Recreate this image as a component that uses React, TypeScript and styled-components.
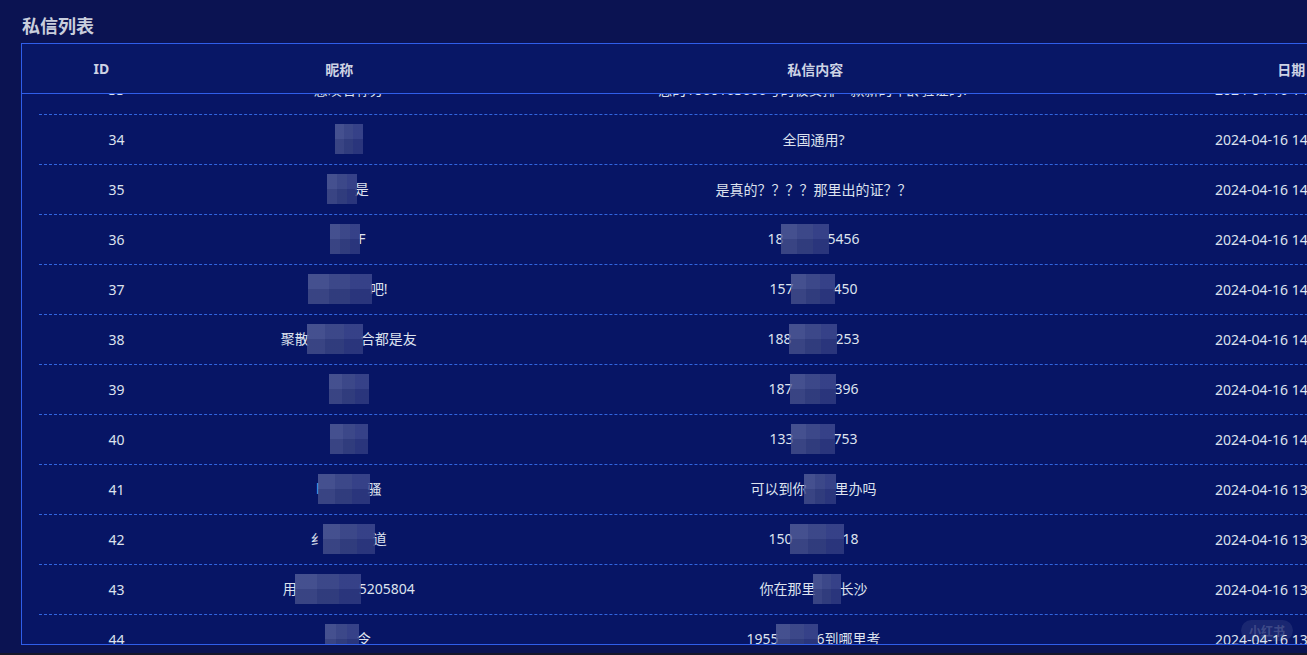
import React from "react";
import styled, { createGlobalStyle } from "styled-components";

const Global = createGlobalStyle`
  html, body { margin: 0; padding: 0; overflow: hidden; background: #16172a; }
  #root { width: 1307px; height: 655px; overflow: hidden; }
  * { box-sizing: border-box; }
`;

const Page = styled.div`
  position: relative;
  height: 653px;
  background: #0b1352;
  padding: 13px 0 0 21px;
  font-family: "Noto Sans", "Noto Sans CJK SC", sans-serif;
  overflow: hidden;
`;

const Title = styled.h2`
  margin: 0 0 6px 1px;
  height: 24px;
  line-height: 24px;
  font-size: 18px;
  font-weight: 700;
  color: #c9cedc;
  font-family: "Noto Sans CJK SC", sans-serif;
`;

const Table = styled.div`
  width: 1430px;
  height: 602px;
  border: 1px solid #2f5ee9;
  background: #071565;
  display: flex;
  flex-direction: column;
`;

const Cols = styled.div`
  display: grid;
  grid-template-columns: 1fr 2fr 4fr 2fr;
  align-items: center;
`;

const Header = styled(Cols)`
  height: 50px;
  flex: none;
  background: #081766;
  border-bottom: 1px solid #2f5ee9;
`;

const HeadCell = styled.div`
  text-align: center;
  font-size: 14px;
  font-weight: 700;
  color: #cdd3e4;
  font-family: "Noto Sans", "Noto Sans CJK SC", sans-serif;
`;

const Body = styled.div`
  flex: 1;
  overflow: hidden;
  padding: 0 17px;
`;

const List = styled.div`
  margin-top: -29px;
`;

const Row = styled(Cols)`
  height: 50px;
  border-bottom: 1px dashed #3066e0;
`;

const Cell = styled.div<{ $shift?: number }>`
  text-align: center;
  font-size: 14px;
  color: #dde2ee;
  white-space: nowrap;
  line-height: 20px;
  padding-left: ${(p) => p.$shift ?? 0}px;
`;

const Mosaic = styled.span<{ $w: number }>`
  display: inline-block;
  width: ${(p) => p.$w}px;
  height: 30px;
  margin: -6px -2px -4px;
  vertical-align: middle;
  background:
    linear-gradient(180deg, rgba(255,255,255,0.06) 0 50%, rgba(0,0,0,0.06) 50% 100%),
    linear-gradient(90deg, #4a5594 0 33%, #3f4a8c 33% 66%, #36428a 66% 100%);
  opacity: 0.8;
`;

const Tint = styled.span`
  color: #5aa8e6;
`;

const Watermark = styled.div`
  position: absolute;
  right: 14px;
  bottom: 12px;
  padding: 2px 8px;
  border-radius: 12px;
  background: rgba(255, 255, 255, 0.08);
  color: rgba(255, 255, 255, 0.18);
  font-size: 12px;
  font-weight: 700;
  font-family: "Noto Sans CJK SC", sans-serif;
`;

type Seg = string | number | { t: string };
type RowData = { id: number; name: Seg[]; msg: Seg[]; date: string };

const rows: RowData[] = [
  { id: 33, name: ["感叹名称分"], msg: ["您的1860163666号的被安排一款新的年龄验证码?"], date: "2024-04-16 14:58:21" },
  { id: 34, name: [28], msg: ["全国通用?"], date: "2024-04-16 14:52:10" },
  { id: 35, name: [30, "是"], msg: ["是真的？？？？那里出的证？？"], date: "2024-04-16 14:49:37" },
  { id: 36, name: [30, "F"], msg: ["18", 48, "5456"], date: "2024-04-16 14:41:05" },
  { id: 37, name: [64, "吧!"], msg: ["157", 44, "450"], date: "2024-04-16 14:33:48" },
  { id: 38, name: ["聚散", 56, "合都是友"], msg: ["188", 48, "253"], date: "2024-04-16 14:25:19" },
  { id: 39, name: [40], msg: ["187", 46, "396"], date: "2024-04-16 14:16:02" },
  { id: 40, name: [38], msg: ["133", 44, "753"], date: "2024-04-16 14:07:44" },
  { id: 41, name: [{ t: "l" }, 52, "骚"], msg: ["可以到你", 32, "里办吗"], date: "2024-04-16 13:58:30" },
  { id: 42, name: ["纟", 52, "道"], msg: ["150", 54, "18"], date: "2024-04-16 13:49:12" },
  { id: 43, name: ["用", 66, "5205804"], msg: ["你在那里", 28, "长沙"], date: "2024-04-16 13:40:56" },
  { id: 44, name: [34, "令"], msg: ["1955", 42, "6到哪里考"], date: "2024-04-16 13:31:27" },
];

const renderSegs = (segs: Seg[]) =>
  segs.map((s, i) =>
    typeof s === "number" ? (
      <Mosaic key={i} $w={s} />
    ) : typeof s === "string" ? (
      <React.Fragment key={i}>{s}</React.Fragment>
    ) : (
      <Tint key={i}>{s.t}</Tint>
    )
  );

export default function App() {
  return (
    <>
      <Global />
      <Page>
        <Title>私信列表</Title>
        <Table>
          <Header>
            <HeadCell>ID</HeadCell>
            <HeadCell>昵称</HeadCell>
            <HeadCell>私信内容</HeadCell>
            <HeadCell>日期</HeadCell>
          </Header>
          <Body>
            <List>
              {rows.map((r) => (
                <Row key={r.id}>
                  <Cell>{r.id}</Cell>
                  <Cell>{renderSegs(r.name)}</Cell>
                  <Cell>{renderSegs(r.msg)}</Cell>
                  <Cell $shift={6}>{r.date}</Cell>
                </Row>
              ))}
            </List>
          </Body>
        </Table>
        <Watermark>小红书</Watermark>
      </Page>
    </>
  );
}
